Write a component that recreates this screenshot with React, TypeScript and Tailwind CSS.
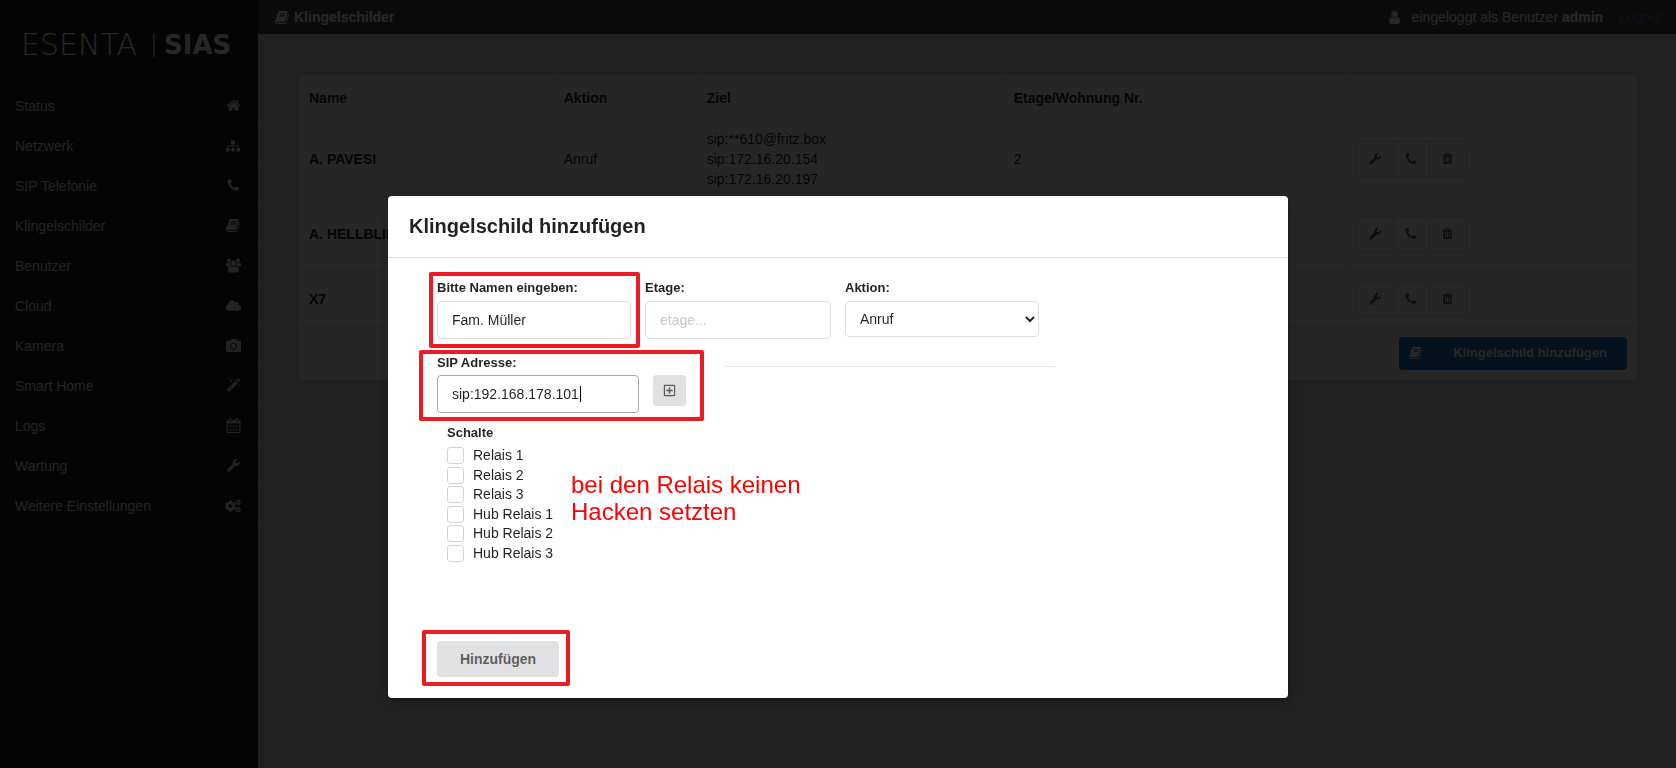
import type { ReactNode } from 'react'
import { FaCamera, FaCloud, FaCogs, FaRegPlusSquare, FaSitemap, FaWrench } from 'react-icons/fa'

type IconProps = { className?: string }

function Glyph({ d, className = 'size-[14px]', viewBox = '0 0 1792 1792' }: IconProps & { d: string; viewBox?: string }) {
  return (
    <svg viewBox={viewBox} fill="currentColor" aria-hidden="true" className={className}>
      <path d={d} />
    </svg>
  )
}

const HomeIcon = (props: IconProps) => (
  <Glyph
    {...props}
    d="M1472 992v480q0 26-19 45t-45 19h-384v-384h-256v384h-384q-26 0-45-19t-19-45v-480q0-1 .5-3t.5-3l575-474 575 474q1 2 1 6zm223-69l-62 74q-8 9-21 11h-3q-13 0-21-7l-692-577-692 577q-12 8-24 7-13-2-21-11l-62-74q-8-10-7-23.5t11-21.5l719-599q32-26 76-26t76 26l244 204v-195q0-14 9-23t23-9h192q14 0 23 9t9 23v408l219 182q10 8 11 21.5t-7 23.5z"
  />
)

const PhoneIcon = (props: IconProps) => (
  <Glyph
    {...props}
    d="M1600 1240q0 27-10 70.5t-21 68.5q-21 50-122 106-94 51-186 51-27 0-53-3.5t-57.5-12.5-47-14.5-55.5-20.5-49-18q-98-35-175-83-127-79-264-216t-216-264q-48-77-83-175-3-9-18-49t-20.5-55.5-14.5-47-12.5-57.5-3.5-53q0-92 51-186 56-101 106-122 25-11 68.5-21t70.5-10q14 0 21 3 18 6 53 76 11 19 30 54t35 63.5 31 53.5q3 4 17.5 25t21.5 35.5 7 28.5q0 20-28.5 50t-62 55-62 53-28.5 46q0 9 5 22.5t8.5 20.5 14 24 11.5 19q76 137 174 235t235 174q2 1 19 11.5t24 14 20.5 8.5 22.5 5q18 0 46-28.5t53-62 55-62 50-28.5q14 0 28.5 7t35.5 21.5 25 17.5q25 15 53.5 31t63.5 35 54 30q70 35 76 53 3 7 3 21z"
  />
)

const BookIcon = (props: IconProps) => (
  <Glyph
    {...props}
    d="M1639 478q40 57 18 129l-275 906q-19 64-76.5 107.5t-122.5 43.5h-923q-77 0-148.5-53.5t-99.5-131.5q-24-67-2-127 0-4 3-27t4-37q1-8-3-21.5t-3-19.5q2-11 8-21t16.5-23.5 16.5-23.5q23-38 45-91.5t30-91.5q3-10 .5-30t-.5-28q3-11 17-28t17-23q21-36 42-92t25-90q1-9-2.5-32t.5-28q4-13 22-30.5t22-22.5q19-26 42.5-84.5t27.5-96.5q1-8-3-25.5t-2-26.5q2-8 9-18t18-23 17-21q8-12 16.5-30.5t15-35 16-36 19.5-32 26.5-23.5 36-11.5 47.5 5.5l-1 3q38-9 51-9h761q74 0 114 56t18 130l-274 906q-36 119-71.5 153.5t-128.5 34.5h-869q-27 0-38 15-11 16-1 43 24 70 144 70h923q29 0 56-15.5t35-41.5l300-987q7-22 5-57 38 15 59 43zm-1064 2q-4 13 2 22.5t20 9.5h608q13 0 25.5-9.5t16.5-22.5l21-64q4-13-2-22.5t-20-9.5h-608q-13 0-25.5 9.5t-16.5 22.5zm-83 256q-4 13 2 22.5t20 9.5h608q13 0 25.5-9.5t16.5-22.5l21-64q4-13-2-22.5t-20-9.5h-608q-13 0-25.5 9.5t-16.5 22.5z"
  />
)

const GroupIcon = (props: IconProps) => (
  <Glyph
    {...props}
    viewBox="64 0 1920 1792"
    d="M657 896q-162 5-265 128h-134q-82 0-138-40.5t-56-118.5q0-353 124-353 6 0 43.5 21t97.5 42.5 119 21.5q67 0 133-23-5 37-5 66 0 139 81 256zm1071 637q0 120-73 189.5t-194 69.5h-874q-121 0-194-69.5t-73-189.5q0-53 3.5-103.5t14-109 26.5-108.5 43-97.5 62-81 85.5-53.5 111.5-20q10 0 43 21.5t73 48 107 48 135 21.5 135-21.5 107-48 73-48 43-21.5q61 0 111.5 20t85.5 53.5 62 81 43 97.5 26.5 108.5 14 109 3.5 103.5zm-1024-1277q0 106-75 181t-181 75-181-75-75-181 75-181 181-75 181 75 75 181zm704 384q0 159-112.5 271.5t-271.5 112.5-271.5-112.5-112.5-271.5 112.5-271.5 271.5-112.5 271.5 112.5 112.5 271.5zm576 225q0 78-56 118.5t-138 40.5h-134q-103-123-265-128 81-117 81-256 0-29-5-66 66 23 133 23 59 0 119-21.5t97.5-42.5 43.5-21q124 0 124 353zm-128-609q0 106-75 181t-181 75-181-75-75-181 75-181 181-75 181 75 75 181z"
  />
)

const WandIcon = (props: IconProps) => (
  <Glyph
    {...props}
    d="M1254 581l293-293-107-107-293 293zm447-293q0 27-18 45l-1286 1286q-18 18-45 18t-45-18l-198-198q-18-18-18-45t18-45l1286-1286q18-18 45-18t45 18l198 198q18 18 18 45zm-1351-190l98 30-98 30-30 98-30-98-98-30 98-30 30-98zm350 162l196 60-196 60-60 196-60-196-196-60 196-60 60-196zm930 478l98 30-98 30-30 98-30-98-98-30 98-30 30-98zm-640-640l98 30-98 30-30 98-30-98-98-30 98-30 30-98z"
  />
)

const CalendarIcon = (props: IconProps) => (
  <Glyph
    {...props}
    d="M192 1664h288v-288h-288v288zm352 0h320v-288h-320v288zm-352-352h288v-320h-288v320zm352 0h320v-320h-320v320zm-352-384h288v-288h-288v288zm736 736h320v-288h-320v288zm-384-736h320v-288h-320v288zm768 736h288v-288h-288v288zm-384-352h320v-320h-320v320zm-352-864v-288q0-13-9.5-22.5t-22.5-9.5h-64q-13 0-22.5 9.5t-9.5 22.5v288q0 13 9.5 22.5t22.5 9.5h64q13 0 22.5-9.5t9.5-22.5zm736 864h288v-320h-288v320zm-384-384h320v-288h-320v288zm384 0h288v-288h-288v288zm32-480v-288q0-13-9.5-22.5t-22.5-9.5h-64q-13 0-22.5 9.5t-9.5 22.5v288q0 13 9.5 22.5t22.5 9.5h64q13 0 22.5-9.5t9.5-22.5zm384-64v1280q0 52-38 90t-90 38h-1408q-52 0-90-38t-38-90v-1280q0-52 38-90t90-38h128v-96q0-66 47-113t113-47h64q66 0 113 47t47 113v96h384v-96q0-66 47-113t113-47h64q66 0 113 47t47 113v96h128q52 0 90 38t38 90z"
  />
)

const UserIcon = (props: IconProps) => (
  <Glyph
    {...props}
    d="M1536 1399q0 109-62.5 187t-150.5 78h-854q-88 0-150.5-78t-62.5-187q0-85 8.5-160.5t31.5-152 58.5-131 94-89 134.5-34.5q131 128 313 128t313-128q76 0 134.5 34.5t94 89 58.5 131 31.5 152 8.5 160.5zm-256-887q0 159-112.5 271.5t-271.5 112.5-271.5-112.5-112.5-271.5 112.5-271.5 271.5-112.5 271.5 112.5 112.5 271.5z"
  />
)

const TrashIcon = (props: IconProps) => (
  <Glyph
    {...props}
    d="M704 1376v-704q0-14-9-23t-23-9h-64q-14 0-23 9t-9 23v704q0 14 9 23t23 9h64q14 0 23-9t9-23zm256 0v-704q0-14-9-23t-23-9h-64q-14 0-23 9t-9 23v704q0 14 9 23t23 9h64q14 0 23-9t9-23zm256 0v-704q0-14-9-23t-23-9h-64q-14 0-23 9t-9 23v704q0 14 9 23t23 9h64q14 0 23-9t9-23zm-544-992h448l-48-117q-7-9-17-11h-317q-10 2-17 11zm928 32v64q0 14-9 23t-23 9h-96v948q0 83-47 143.5t-113 60.5h-832q-66 0-113-58.5t-47-141.5v-952h-96q-14 0-23-9t-9-23v-64q0-14 9-23t23-9h309l70-167q15-37 54-63t79-26h320q40 0 79 26t54 63l70 167h309q14 0 23 9t9 23z"
  />
)

const menu: { label: string; icon: ReactNode }[] = [
  { label: 'Status', icon: <HomeIcon className="size-[15px]" /> },
  { label: 'Netzwerk', icon: <FaSitemap className="size-[14px]" /> },
  { label: 'SIP Telefonie', icon: <PhoneIcon className="size-[15px]" /> },
  { label: 'Klingelschilder', icon: <BookIcon className="size-[15px]" /> },
  { label: 'Benutzer', icon: <GroupIcon className="size-[15px]" /> },
  { label: 'Cloud', icon: <FaCloud className="size-[15px]" /> },
  { label: 'Kamera', icon: <FaCamera className="size-[15px]" /> },
  { label: 'Smart Home', icon: <WandIcon className="size-[15px]" /> },
  { label: 'Logs', icon: <CalendarIcon className="size-[15px]" /> },
  { label: 'Wartung', icon: <FaWrench className="size-[13px]" /> },
  { label: 'Weitere Einstellungen', icon: <FaCogs className="size-4" /> },
]

const rows = [
  {
    name: 'A. PAVESI',
    action: 'Anruf',
    targets: ['sip:**610@fritz.box', 'sip:172.16.20.154', 'sip:172.16.20.197'],
    floor: '2',
    height: 'h-[75px]',
  },
  { name: 'A. HELLBLING', action: '', targets: [], floor: '', height: 'h-[75px]' },
  { name: 'X7', action: '', targets: [], floor: '', height: 'h-[55px]' },
]

const relays = ['Relais 1', 'Relais 2', 'Relais 3', 'Hub Relais 1', 'Hub Relais 2', 'Hub Relais 3']

function Sidebar() {
  return (
    <aside className="w-[258px] shrink-0 bg-[#1b1c1d] text-[#e6e6e6]">
      <div className="flex h-[86px] items-center pt-1 pl-[21px] font-['DejaVu_Sans',sans-serif] leading-8 text-white">
        <span className="w-[132px] text-[30px] font-extralight">ESENTA</span>
        <span className="h-6 w-[2px] bg-[#50c8b4]" />
        <span className="pl-[9px] text-[26px] font-bold">SIAS</span>
      </div>
      <nav>
        {menu.map((item) => (
          <a
            key={item.label}
            href="#"
            className="flex h-10 items-center justify-between border-b border-white/8 pr-[15px] pl-[15px]"
          >
            {item.label}
            <span className="flex w-5 justify-center">{item.icon}</span>
          </a>
        ))}
      </nav>
    </aside>
  )
}

function TopBar() {
  return (
    <header className="flex h-[34px] items-center justify-between bg-[#4c4c4c] pr-[14px] pl-[17px] text-white">
      <div className="flex items-center gap-1 font-bold">
        <BookIcon className="size-[15px]" />
        Klingelschilder
      </div>
      <div className="flex items-center">
        <UserIcon className="mr-[10px] size-[15px]" />
        <span>
          eingeloggt als Benutzer <b>admin</b>
        </span>
        <a href="#" className="ml-4 text-[#4183c4]">
          Logout
        </a>
      </div>
    </header>
  )
}

function RowActions({ name }: { name: string }) {
  return (
    <div className="inline-flex h-9 divide-x divide-[#dededf] rounded border border-[#dededf] align-middle text-black/60">
      <button aria-label={`${name} bearbeiten`} className="flex w-[37px] items-center justify-center">
        <FaWrench className="size-3" />
      </button>
      <button aria-label={`${name} anrufen`} className="flex w-9 items-center justify-center">
        <PhoneIcon className="size-[14px]" />
      </button>
      <button aria-label={`${name} entfernen`} className="flex w-9 items-center justify-center">
        <TrashIcon className="size-[13px]" />
      </button>
    </div>
  )
}

function DoorbellTable() {
  return (
    <div className="overflow-hidden rounded bg-white text-black/87">
      <table className="w-full table-fixed border-collapse text-left">
        <colgroup>
          <col className="w-[19%]" />
          <col className="w-[143px]" />
          <col className="w-[307px]" />
          <col className="w-[342px]" />
          <col />
        </colgroup>
        <thead>
          <tr className="h-[46px] divide-x divide-[#ebebeb]">
            <th className="px-[10px]">Name</th>
            <th className="px-[10px]">Aktion</th>
            <th className="px-[10px]">Ziel</th>
            <th className="px-[10px]">Etage/Wohnung Nr.</th>
            <th className="px-[10px]" />
          </tr>
        </thead>
        <tbody>
          {rows.map((row) => (
            <tr key={row.name} className={`${row.height} divide-x divide-[#ebebeb] border-t border-[#e0e0e0]`}>
              <td className="px-[10px] font-bold">{row.name}</td>
              <td className="px-[10px]">{row.action}</td>
              <td className="px-[10px]">
                {row.targets.map((target) => (
                  <div key={target}>{target}</div>
                ))}
              </td>
              <td className="px-[10px]">{row.floor}</td>
              <td className="px-[10px]">
                <RowActions name={row.name} />
              </td>
            </tr>
          ))}
        </tbody>
        <tfoot>
          <tr className="h-[54px] border-t border-[#d4d4d5]">
            <td colSpan={5} className="px-[10px]">
              <button className="ml-auto flex h-[33px] items-center rounded bg-[#1678c2] pr-5 text-[13px] font-bold text-white">
                <span className="flex w-[34px] justify-center">
                  <BookIcon className="size-[14px]" />
                </span>
                <span className="pl-5">Klingelschild hinzufügen</span>
              </button>
            </td>
          </tr>
        </tfoot>
      </table>
    </div>
  )
}

// Red frame drawn over a group of controls
function Marker({ className }: { className: string }) {
  return <span className={`pointer-events-none absolute rounded-[2px] border-4 border-[#ed1c24] ${className}`} />
}

function AddDialog() {
  const label = 'block text-[13px] leading-5 font-bold'
  const input = 'block h-[38px] w-full rounded border bg-white px-[14px] placeholder:text-[#c7c7c7]'

  return (
    <div className="fixed inset-0 flex items-start justify-center bg-black/85 pt-[196px]">
      <div
        role="dialog"
        aria-labelledby="dialog-title"
        className="w-[900px] max-w-full rounded bg-white text-black/87 shadow-[1px_3px_3px_0_rgba(0,0,0,0.2),1px_3px_15px_2px_rgba(0,0,0,0.2)]"
      >
        <h2 id="dialog-title" className="border-b border-[#dededf] px-[21px] pt-4 pb-[17px] text-[20px] leading-7 font-bold">
          Klingelschild hinzufügen
        </h2>
        <form className="pt-5 pr-6 pb-[21px] pl-[49px]" onSubmit={(e) => e.preventDefault()}>
          <div className="flex gap-[14px]">
            <div className="relative w-[194px]">
              <label htmlFor="name" className={label}>
                Bitte Namen eingeben:
              </label>
              <input id="name" defaultValue="Fam. Müller" className={`${input} mt-[3px] border-[#dededf]`} />
              <Marker className="-top-[6px] -right-[9px] -bottom-[9px] -left-2" />
            </div>
            <div className="w-[186px]">
              <label htmlFor="floor" className={label}>
                Etage:
              </label>
              <input id="floor" placeholder="etage..." className={`${input} mt-[3px] border-[#dededf]`} />
            </div>
            <div className="w-[194px]">
              <label htmlFor="action" className={label}>
                Aktion:
              </label>
              <select id="action" className="mt-[3px] h-9 w-full rounded border border-[#dededf] bg-white pl-[10px]">
                <option>Anruf</option>
              </select>
            </div>
          </div>

          <div className="mt-[14px] flex items-start gap-[38px]">
            <div className="relative w-[249px]">
              <label htmlFor="sip" className={label}>
                SIP Adresse:
              </label>
              <div className="mt-[2px] flex items-start gap-[14px]">
                <div className="relative w-[202px]">
                  <input id="sip" defaultValue="sip:192.168.178.101" className={`${input} border-[#a9a9aa]`} />
                  <span className="absolute top-[11px] left-[143px] h-4 w-px bg-black" />
                </div>
                <button
                  type="button"
                  aria-label="SIP Adresse hinzufügen"
                  className="flex h-[31px] w-[33px] items-center justify-center rounded bg-[#e0e1e2] text-black/60"
                >
                  <FaRegPlusSquare className="size-[13px]" />
                </button>
              </div>
              <Marker className="-top-[3px] -right-[18px] -bottom-2 -left-[18px]" />
            </div>
            <hr className="mt-[13px] w-[330px] border-[#e8e8e9]" />
          </div>

          <fieldset className="relative mt-[10px] ml-[10px]">
            <legend className={label}>Schalte</legend>
            <div className="mt-1 flex h-[115px] flex-col justify-between">
              {relays.map((relay) => (
                <label key={relay} className="flex h-[17px] w-fit items-center gap-[9px] leading-[17px]">
                  <input type="checkbox" className="size-[17px] appearance-none rounded-[3px] border border-[#d4d4d5] bg-white" />
                  {relay}
                </label>
              ))}
            </div>
            <p className="absolute top-7 left-[124px] text-[24px] leading-[27px] text-[#ff0000]">
              bei den Relais keinen
              <br />
              Hacken setzten
            </p>
          </fieldset>

          <div className="relative mt-[79px] w-fit">
            <button type="submit" className="block h-9 w-[122px] rounded bg-[#e0e1e2] font-bold text-black/60">
              Hinzufügen
            </button>
            <Marker className="-top-[11px] -right-[11px] -bottom-[9px] -left-[15px]" />
          </div>
        </form>
      </div>
    </div>
  )
}

export default function App() {
  return (
    <div className="flex min-h-screen bg-[#dcdcdc] font-['Liberation_Sans',Arial,sans-serif] text-[14px] leading-5">
      <Sidebar />
      <div className="min-w-0 flex-1">
        <TopBar />
        <main className="pt-[41px] pr-[39px] pl-[41px]">
          <DoorbellTable />
        </main>
      </div>
      <AddDialog />
    </div>
  )
}
